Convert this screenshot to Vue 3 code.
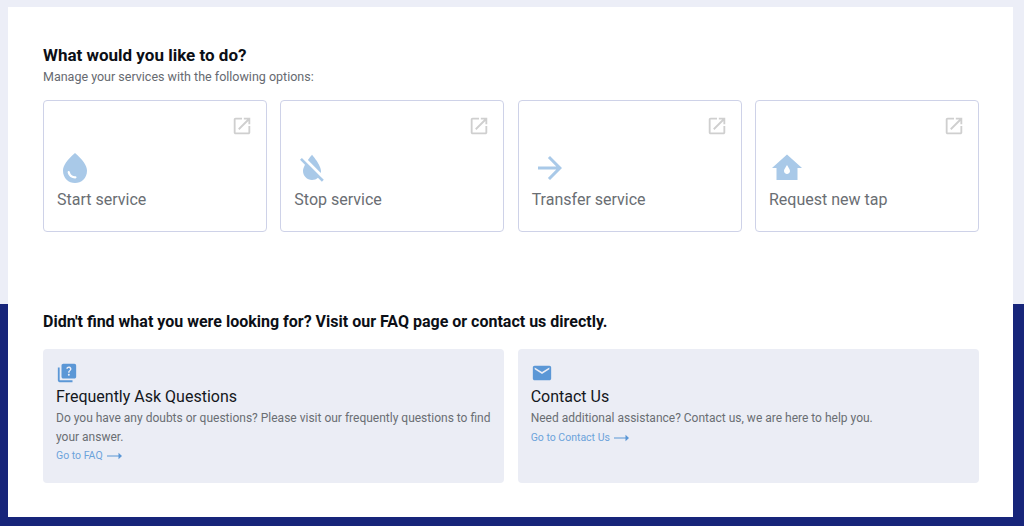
<script setup>
const external = 'M19 19H5V5h7V3H5c-1.11 0-2 .9-2 2v14c0 1.1.89 2 2 2h14c1.1 0 2-.9 2-2v-7h-2v7zM14 3v2h3.59l-9.83 9.83 1.41 1.41L19 6.41V10h2V3h-7z'

const services = [
  {
    label: 'Start service',
    icon: 'M12 2c-5.33 4.55-8 8.48-8 11.8 0 4.98 3.8 8.2 8 8.2s8-3.22 8-8.2c0-3.32-2.67-7.25-8-11.8zM7.83 14c.37 0 .67.26.74.62.41 2.22 2.28 2.98 3.64 2.87.43-.02.79.32.79.75 0 .4-.32.73-.72.75-2.13.13-4.62-1.09-5.19-4.12-.08-.45.28-.87.74-.87z'
  },
  {
    label: 'Stop service',
    icon: 'M18 14c0-4-6-10.8-6-10.8s-1.33 1.51-2.73 3.52l8.59 8.59c.09-.42.14-.86.14-1.31zm-.88 3.12L12.5 12.5 5.27 5.27 4 6.55l3.32 3.32C6.55 11.32 6 12.79 6 14c0 3.31 2.69 6 6 6 1.52 0 2.9-.57 3.96-1.5l2.63 2.63 1.27-1.27-2.74-2.74z'
  },
  {
    label: 'Transfer service',
    icon: 'M12 4l-1.41 1.41L16.17 11H4v2h12.17l-5.58 5.59L12 20l8-8z'
  },
  {
    label: 'Request new tap',
    icon: 'M12 3L2 12h3v8h14v-8h3L12 3zm0 13c-1.1 0-2-.9-2-2 0-1.1 2-4 2-4s2 2.9 2 4c0 1.1-.9 2-2 2z'
  }
]

const helpCards = [
  {
    title: 'Frequently Ask Questions',
    text: 'Do you have any doubts or questions? Please visit our frequently questions to find your answer.',
    link: 'Go to FAQ',
    icon: 'M4 6H2v14c0 1.1.9 2 2 2h14v-2H4V6zM20 2H8c-1.1 0-2 .9-2 2v12c0 1.1.9 2 2 2h12c1.1 0 2-.9 2-2V4c0-1.1-.9-2-2-2zm-5.99 13c-.59 0-1.05-.47-1.05-1.05 0-.59.47-1.04 1.05-1.04.59 0 1.04.45 1.04 1.04-.01.58-.45 1.05-1.04 1.05zm2.5-6.17c-.63.93-1.23 1.21-1.56 1.81-.13.24-.18.4-.18 1.18h-1.52c0-.41-.06-1.08.26-1.65.41-.73 1.18-1.16 1.63-1.8.48-.68.21-1.94-1.14-1.94-.88 0-1.32.67-1.5 1.23l-1.37-.57C11.51 5.96 12.52 5 13.99 5c1.23 0 2.08.56 2.51 1.26.37.61.58 1.73.01 2.57z'
  },
  {
    title: 'Contact Us',
    text: 'Need additional assistance? Contact us, we are here to help you.',
    link: 'Go to Contact Us',
    icon: 'M20 4H4c-1.1 0-2 .9-2 2v12c0 1.1.9 2 2 2h16c1.1 0 2-.9 2-2V6c0-1.1-.9-2-2-2zm0 4l-8 5-8-5V6l8 5 8-5v2z'
  }
]
</script>

<template>
  <div class="page">
    <main class="panel">
      <h1 class="title">What would you like to do?</h1>
      <p class="subtitle">Manage your services with the following options:</p>

      <div class="services">
        <a v-for="item in services" :key="item.label" class="service-card">
          <svg class="external" viewBox="0 0 24 24" aria-hidden="true">
            <path :d="external" />
          </svg>
          <svg class="service-icon" viewBox="0 0 24 24" aria-hidden="true">
            <path :d="item.icon" />
          </svg>
          <span class="service-label">{{ item.label }}</span>
        </a>
      </div>

      <h2 class="help-title">Didn't find what you were looking for? Visit our FAQ page or contact us directly.</h2>

      <div class="help">
        <div v-for="card in helpCards" :key="card.title" class="help-card">
          <svg class="help-icon" viewBox="0 0 24 24" aria-hidden="true">
            <path :d="card.icon" />
          </svg>
          <h3 class="help-card-title">{{ card.title }}</h3>
          <p class="help-card-text">{{ card.text }}</p>
          <a class="help-link">
            {{ card.link }}
            <svg class="link-arrow" viewBox="0 0 15 8" aria-hidden="true">
              <path d="M0 3.4h11.5V.8L15 4l-3.5 3.2V4.6H0z" />
            </svg>
          </a>
        </div>
      </div>
    </main>
  </div>
</template>

<style scoped>
.page {
  height: 526px;
  box-sizing: border-box;
  padding: 7px 11px 9px 8px;
  background: linear-gradient(to bottom, #eceef7 304px, #17257a 304px);
  font-family: Roboto, "Liberation Sans", sans-serif;
}

.panel {
  height: 100%;
  box-sizing: border-box;
  padding: 38px 34px 0 35px;
  background: #fff;
}

.title {
  margin: 0;
  font-size: 17px;
  line-height: 20px;
  font-weight: 700;
  color: #0c0f16;
}

.subtitle {
  margin: 3px 0 0;
  font-size: 12.5px;
  line-height: 18px;
  color: #666a70;
}

.services {
  display: grid;
  grid-template-columns: repeat(4, 1fr);
  gap: 13.33px;
  margin-top: 14px;
}

.service-card {
  position: relative;
  height: 132px;
  box-sizing: border-box;
  padding: 49px 13px 0;
  display: flex;
  flex-direction: column;
  align-items: flex-start;
  border: 1px solid #ced2e8;
  border-radius: 4px;
  background: #fff;
}

.external {
  position: absolute;
  top: 14px;
  right: 13px;
  width: 22px;
  height: 22px;
  fill: #cfcfcf;
}

.service-icon {
  width: 36px;
  height: 36px;
  fill: #a9c9e8;
}

.service-label {
  margin-top: 2px;
  font-size: 16px;
  line-height: 24px;
  color: #6a6e73;
}

.help-title {
  margin: 80px 0 0;
  font-size: 16px;
  line-height: 20px;
  font-weight: 700;
  color: #0c0f16;
}

.help {
  display: grid;
  grid-template-columns: repeat(2, 1fr);
  gap: 13.33px;
  margin-top: 17px;
}

.help-card {
  height: 134px;
  box-sizing: border-box;
  padding: 13px 13px 0;
  border-radius: 4px;
  background: #ebedf5;
}

.help-icon {
  display: block;
  width: 22px;
  height: 22px;
  fill: #5b97d6;
}

.help-card-title {
  margin: 3px 0 0;
  font-size: 16px;
  line-height: 20px;
  font-weight: 400;
  color: #14171c;
}

.help-card-text {
  margin: 2px 0 0;
  font-size: 12px;
  line-height: 18.5px;
  color: #6a6e73;
}

.help-link {
  display: flex;
  align-items: center;
  gap: 4px;
  margin-top: 2px;
  font-size: 10.5px;
  line-height: 16px;
  color: #6ba3db;
}

.link-arrow {
  width: 15px;
  height: 8px;
  fill: #5b97d6;
}
</style>

<style>
html, body {
  margin: 0;
  background: #fff;
}
</style>
